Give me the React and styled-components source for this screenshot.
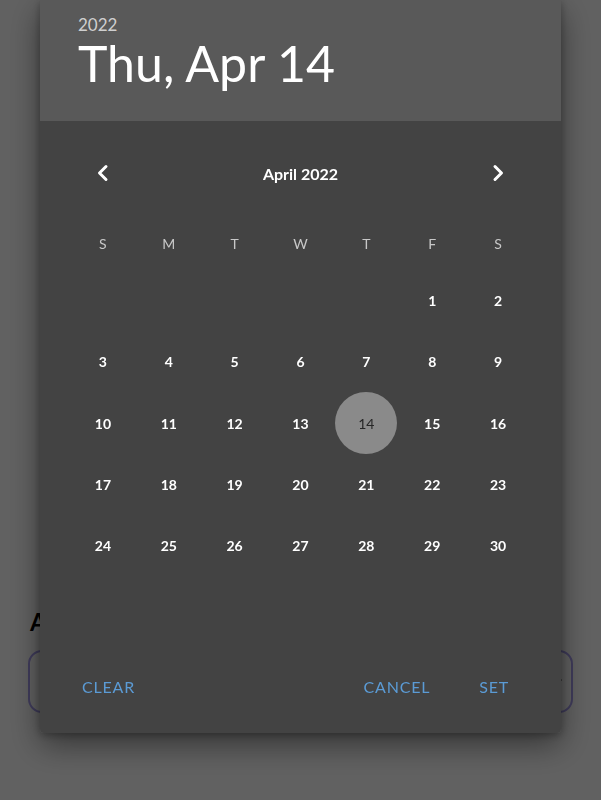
import styled, { createGlobalStyle } from 'styled-components';

const GlobalStyle = createGlobalStyle`
  html, body { margin: 0; padding: 0; }
  body {
    background: #ffffff;
    font-family: Lato, "Open Sans", "DejaVu Sans", sans-serif;
    width: 601px;
    height: 800px;
    overflow: hidden;
  }
`;

const WEEKDAYS = ['S', 'M', 'T', 'W', 'T', 'F', 'S'];
const FIRST_WEEKDAY = 5; // April 1st 2022 is a Friday
const DAYS_IN_MONTH = 30;
const SELECTED = 14;

export default function App() {
    const cells = [];
    for (let i = 0; i < FIRST_WEEKDAY; i++) cells.push(null);
    for (let d = 1; d <= DAYS_IN_MONTH; d++) cells.push(d);

    return (
        <>
            <GlobalStyle />
            <Page>
                <FieldLabel>Appointment date</FieldLabel>
                <FieldBox>
                    <FieldIcon viewBox="0 0 24 24">
                        <path d="M6 9l6 6 6-6" fill="none" stroke="#222" strokeWidth="2" strokeLinecap="round" strokeLinejoin="round" />
                    </FieldIcon>
                </FieldBox>
            </Page>
            <Overlay>
                <Dialog>
                    <Header>
                        <Year>2022</Year>
                        <BigDate>Thu, Apr 14</BigDate>
                    </Header>
                    <Body>
                        <NavRow>
                            <NavButton aria-label="previous month">
                                <svg width="14" height="18" viewBox="0 0 14 18">
                                    <path d="M10 2.5L3.5 9l6.5 6.5" fill="none" stroke="#fff" strokeWidth="3" strokeLinecap="round" strokeLinejoin="round" />
                                </svg>
                            </NavButton>
                            <MonthLabel>April 2022</MonthLabel>
                            <NavButton aria-label="next month">
                                <svg width="14" height="18" viewBox="0 0 14 18">
                                    <path d="M4 2.5L10.5 9 4 15.5" fill="none" stroke="#fff" strokeWidth="3" strokeLinecap="round" strokeLinejoin="round" />
                                </svg>
                            </NavButton>
                        </NavRow>
                        <WeekRow>
                            {WEEKDAYS.map((w, i) => <WeekDay key={i}>{w}</WeekDay>)}
                        </WeekRow>
                        <DayGrid>
                            {cells.map((d, i) =>
                                <DayCell key={i}>
                                    {d ? <Day $selected={d === SELECTED}>{d}</Day> : null}
                                </DayCell>)}
                        </DayGrid>
                        <Footer>
                            <TextButton>Clear</TextButton>
                            <Spacer />
                            <TextButton>Cancel</TextButton>
                            <TextButton>Set</TextButton>
                        </Footer>
                    </Body>
                </Dialog>
            </Overlay>
        </>
    );
}

const Page = styled.div`
padding: 607px 28px 0 28px;
display: flex;
flex-direction: column;
gap: 14px;
`
const FieldLabel = styled.div`
font-size: 24px;
font-weight: bold;
color: #000;
padding-left: 2px;
`
const FieldBox = styled.div`
height: 59px;
border: 2px solid #a89ef0;
border-radius: 14px;
display: flex;
align-items: center;
justify-content: flex-end;
padding-right: 6px;
`
const FieldIcon = styled.svg`
width: 16px;
height: 16px;
`
const Overlay = styled.div`
position: fixed;
inset: 0;
background: rgba(0, 0, 0, 0.62);
display: flex;
justify-content: center;
align-items: flex-start;
`
const Dialog = styled.div`
width: 521px;
border-radius: 0 0 4px 4px;
overflow: hidden;
box-shadow: 0 12px 32px rgba(0, 0, 0, 0.45), 0 2px 8px rgba(0, 0, 0, 0.3);
`
const Header = styled.div`
height: 121px;
box-sizing: border-box;
background: #595959;
padding: 14px 38px 0 38px;
display: flex;
flex-direction: column;
`
const Year = styled.div`
font-size: 17px;
line-height: 22px;
color: #cfcfcf;
`
const BigDate = styled.div`
font-size: 50px;
line-height: 54px;
color: #ffffff;
`
const Body = styled.div`
height: 612px;
box-sizing: border-box;
background: #434343;
padding: 32px 30px 29px 30px;
display: flex;
flex-direction: column;
`
const NavRow = styled.div`
height: 40px;
display: grid;
grid-template-columns: 66px 1fr 66px;
align-items: center;
`
const NavButton = styled.button`
background: none;
border: none;
padding: 0;
display: flex;
align-items: center;
justify-content: center;
cursor: pointer;
`
const MonthLabel = styled.div`
text-align: center;
color: #ffffff;
font-size: 16px;
font-weight: bold;
`
const WeekRow = styled.div`
margin-top: 30px;
height: 40px;
display: grid;
grid-template-columns: repeat(7, 1fr);
align-items: center;
`
const WeekDay = styled.div`
text-align: center;
font-size: 14px;
color: #c8c8c8;
`
const DayGrid = styled.div`
margin-top: 7px;
display: grid;
grid-template-columns: repeat(7, 1fr);
grid-auto-rows: 61.3px;
height: 368px;
`
const DayCell = styled.div`
display: flex;
align-items: center;
justify-content: center;
`
const Day = styled.div`
width: 62px;
height: 62px;
border-radius: 50%;
display: flex;
align-items: center;
justify-content: center;
font-size: 14px;
font-weight: ${props => props.$selected ? 'normal' : 'bold'};
color: ${props => props.$selected ? '#262626' : '#ffffff'};
background: ${props => props.$selected ? '#8a8a8a' : 'transparent'};
`
const Footer = styled.div`
margin-top: auto;
height: 36px;
display: flex;
align-items: center;
gap: 25px;
padding: 0 10px 0 0;
`
const Spacer = styled.div`
flex: 1;
`
const TextButton = styled.button`
background: none;
border: none;
padding: 0 12px;
height: 36px;
font-family: inherit;
font-size: 16px;
text-transform: uppercase;
color: #5b9bd5;
letter-spacing: 0.8px;
cursor: pointer;
`
